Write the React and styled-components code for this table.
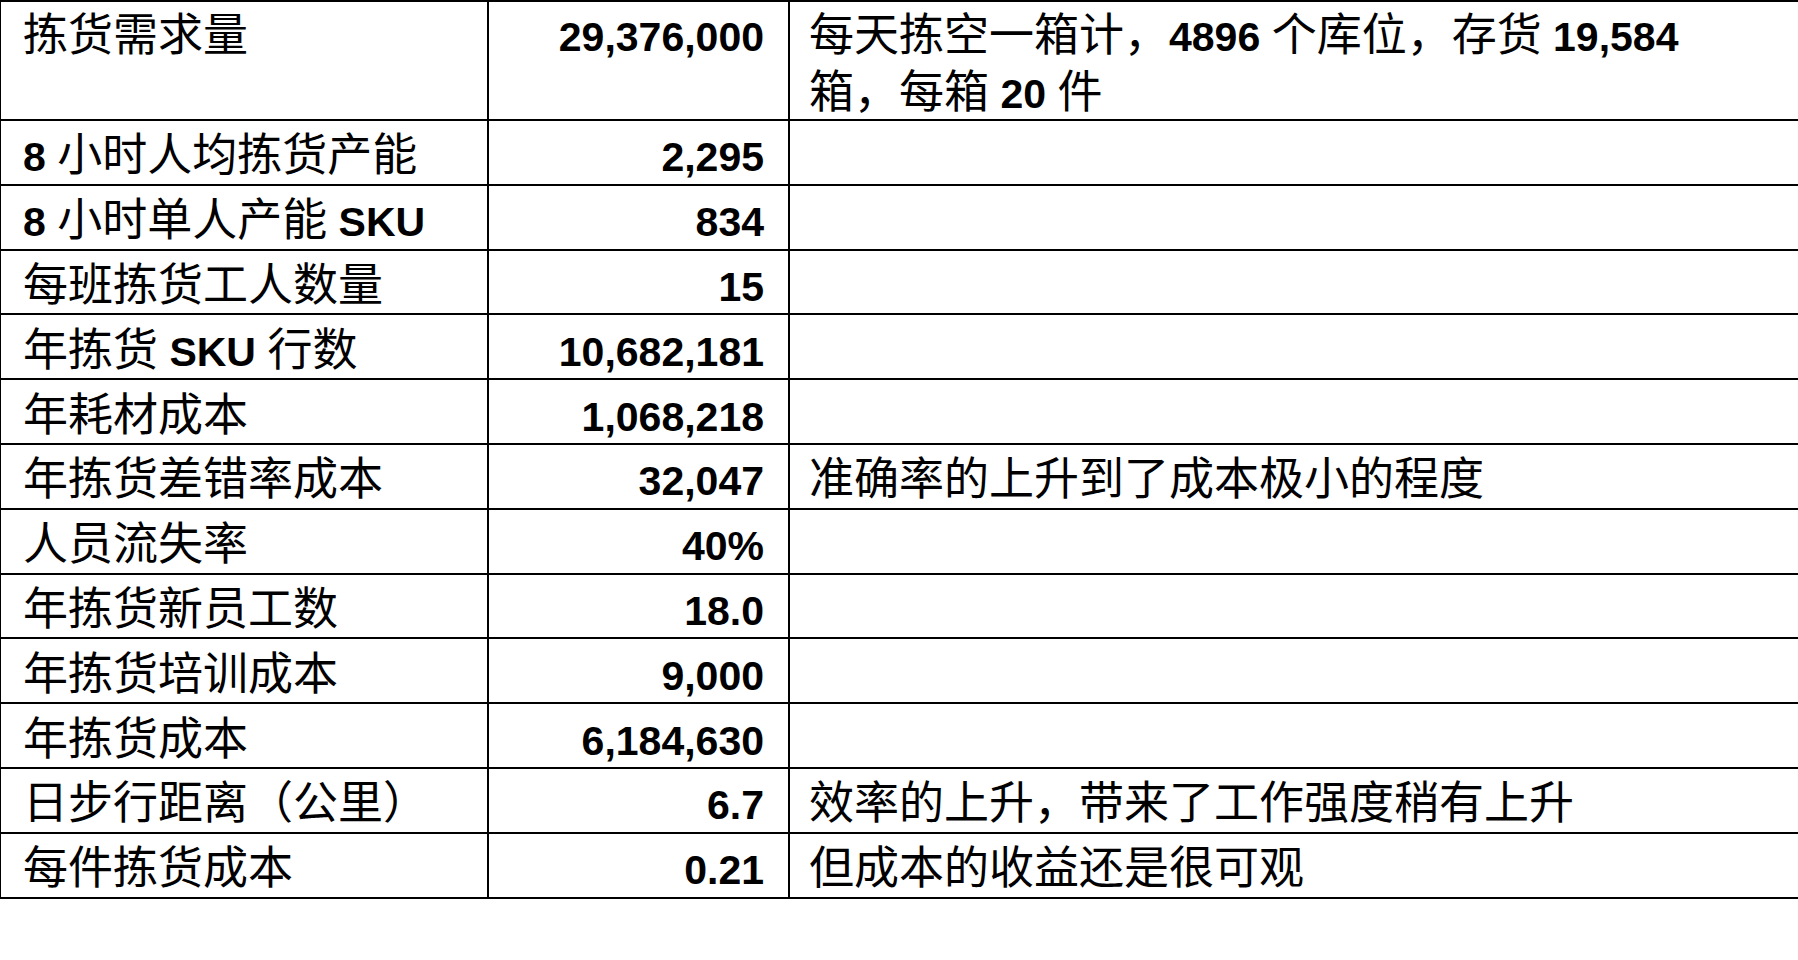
import React from 'react'
import styled, { createGlobalStyle } from 'styled-components'

const GlobalStyle = createGlobalStyle`
  html, body {
    margin: 0;
    padding: 0;
    background: #fff;
    overflow: hidden;
  }
  body {
    font-family: "Noto Sans CJK SC", "Liberation Sans", sans-serif;
    color: #000;
  }
`

const rows = [
  ['拣货需求量', '29,376,000', ['每天拣空一箱计，4896 个库位，存货 19,584', '箱，每箱 20 件']],
  ['8 小时人均拣货产能', '2,295', []],
  ['8 小时单人产能 SKU', '834', []],
  ['每班拣货工人数量', '15', []],
  ['年拣货 SKU 行数', '10,682,181', []],
  ['年耗材成本', '1,068,218', []],
  ['年拣货差错率成本', '32,047', ['准确率的上升到了成本极小的程度']],
  ['人员流失率', '40%', []],
  ['年拣货新员工数', '18.0', []],
  ['年拣货培训成本', '9,000', []],
  ['年拣货成本', '6,184,630', []],
  ['日步行距离（公里）', '6.7', ['效率的上升，带来了工作强度稍有上升']],
  ['每件拣货成本', '0.21', ['但成本的收益还是很可观']],
]

const Sheet = styled.table`
  width: 1802px;
  border-collapse: collapse;
  table-layout: fixed;
  margin: 0 0 0 -1px;
`

const Row = styled.tr`
  height: ${p => (p.$tall ? '119px' : '64.8px')};
`

const Cell = styled.td`
  border: 2px solid #000;
  height: ${p => (p.$tall ? '119px' : '64.8px')};
  box-sizing: border-box;
  padding: 0 24px 0 ${p => (p.$note ? '19px' : '22px')};
  font-size: 45px;
  vertical-align: ${p => (p.$tall ? 'top' : 'middle')};
  text-align: ${p => (p.$num ? 'right' : 'left')};
  white-space: nowrap;
`

const Line = styled.div`
  height: ${p => (p.$tall ? '57px' : '56px')};
  line-height: ${p => (p.$tall ? '60px' : '56px')};
`

const Latin = styled.span`
  font-family: "Liberation Sans", Arial, sans-serif;
  font-weight: 700;
  font-size: 41px;
  line-height: 1;
`

function Mixed({ text }) {
  const parts = text.split(/([\x20-\x7E]+)/).filter(Boolean)
  return parts.map((part, i) =>
    /^[\x20-\x7E]+$/.test(part) ? <Latin key={i}>{part}</Latin> : <span key={i}>{part}</span>
  )
}

export default function App() {
  return (
    <>
      <GlobalStyle />
      <Sheet>
        <colgroup>
          <col style={{ width: 488 }} />
          <col style={{ width: 301 }} />
          <col />
        </colgroup>
        <tbody>
          {rows.map(([label, value, notes], i) => {
            const tall = notes.length > 1
            return (
              <Row key={i} $tall={tall}>
                <Cell $tall={tall}>
                  <Line $tall={tall}><Mixed text={label} /></Line>
                </Cell>
                <Cell $tall={tall} $num>
                  <Line $tall={tall}><Mixed text={value} /></Line>
                </Cell>
                <Cell $tall={tall} $note>
                  {notes.map((line, j) => (
                    <Line key={j} $tall={tall}><Mixed text={line} /></Line>
                  ))}
                </Cell>
              </Row>
            )
          })}
        </tbody>
      </Sheet>
    </>
  )
}
